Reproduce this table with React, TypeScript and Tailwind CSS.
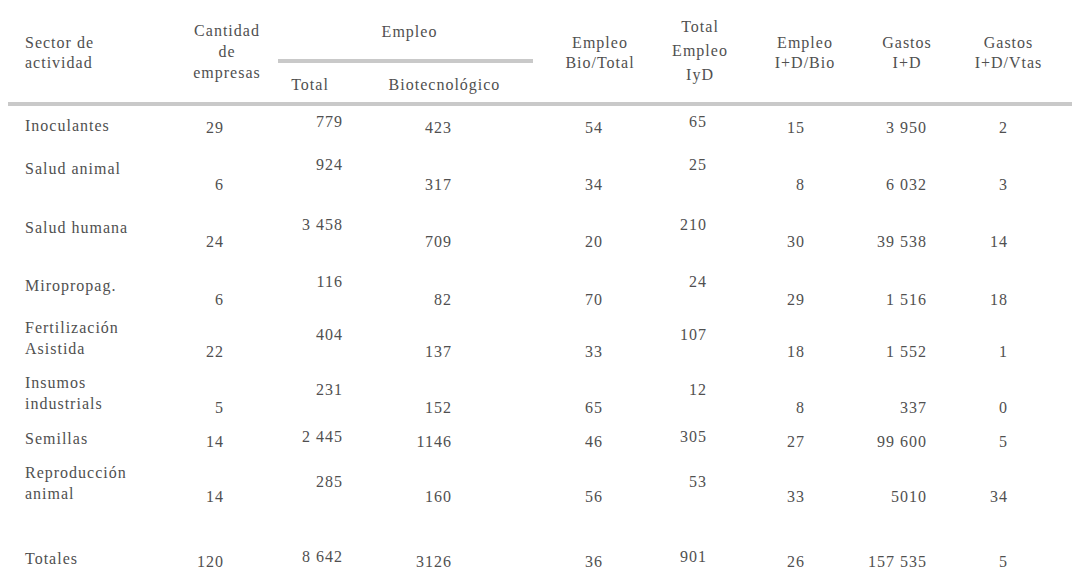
const rows = [
  { label: ["Inoculantes"], h: "h-[44px]", lp: "pt-[9px]", lo: "pt-[12px]", hi: "pt-[6px]", v: ["29", "779", "423", "54", "65", "15", "3 950", "2"] },
  { label: ["Salud animal"], h: "h-[58px]", lp: "pt-[8px]", lo: "pt-[25px]", hi: "pt-[5px]", v: ["6", "924", "317", "34", "25", "8", "6 032", "3"] },
  { label: ["Salud humana"], h: "h-[57px]", lp: "pt-[9px]", lo: "pt-[24px]", hi: "pt-[7px]", v: ["24", "3 458", "709", "20", "210", "30", "39 538", "14"] },
  { label: ["Miropropag."], h: "h-[47px]", lp: "pt-[10px]", lo: "pt-[25px]", hi: "pt-[7px]", v: ["6", "116", "82", "70", "24", "29", "1 516", "18"] },
  { label: ["Fertilización", "Asistida"], h: "h-[55px]", lp: "pt-[5px]", lo: "pt-[30px]", hi: "pt-[13px]", v: ["22", "404", "137", "33", "107", "18", "1 552", "1"] },
  { label: ["Insumos", "industrials"], h: "h-[57px]", lp: "pt-[5px]", lo: "pt-[31px]", hi: "pt-[13px]", v: ["5", "231", "152", "65", "12", "8", "337", "0"] },
  { label: ["Semillas"], h: "h-[34px]", lp: "pt-[4px]", lo: "pt-[8px]", hi: "pt-[3px]", v: ["14", "2 445", "1146", "46", "305", "27", "99 600", "5"] },
  { label: ["Reproducción", "animal"], h: "h-[82px]", lp: "pt-[4px]", lo: "pt-[29px]", hi: "pt-[14px]", v: ["14", "285", "160", "56", "53", "33", "5010", "34"] },
  { label: ["Totales"], h: "h-[48px]", lp: "pt-[8px]", lo: "pt-[12px]", hi: "pt-[7px]", v: ["120", "8 642", "3126", "36", "901", "26", "157 535", "5"] },
];

// columns 1 and 4 of the values (Total, Total Empleo IyD) sit higher in the scan
const highCols = [1, 4];

export default function App() {
  return (
    <div className="w-[1080px] h-[588px] bg-white text-[#505050] text-[16px] tracking-[1px] leading-[20px] overflow-hidden font-['Liberation_Serif','DejaVu_Serif',serif]">
      {/* header */}
      <div className="grid grid-cols-[176px_102px_255px_134px_66px_144px_60px_143px] h-[102px]">
        <div className="pl-[25px] pt-[33px]">
          <div>Sector de</div>
          <div>actividad</div>
        </div>
        <div className="pt-[20px] text-center leading-[21px]">
          <div>Cantidad</div>
          <div>de</div>
          <div>empresas</div>
        </div>
        <div className="pt-[22px] flex flex-col">
          <div className="text-center pl-[8px]">Empleo</div>
          <div className="mt-[17px] h-[4px] bg-[#c9c9c9]" />
          <div className="mt-[12px] grid grid-cols-[64px_191px]">
            <div className="text-center">Total</div>
            <div className="text-center pl-[14px]">Biotecnológico</div>
          </div>
        </div>
        <div className="pt-[33px] text-center">
          <div>Empleo</div>
          <div>Bio/Total</div>
        </div>
        <div className="pt-[15px] text-center leading-[24px]">
          <div>Total</div>
          <div>Empleo</div>
          <div>IyD</div>
        </div>
        <div className="pt-[33px] text-center">
          <div>Empleo</div>
          <div>I+D/Bio</div>
        </div>
        <div className="pt-[33px] text-center">
          <div>Gastos</div>
          <div>I+D</div>
        </div>
        <div className="pt-[33px] text-center">
          <div>Gastos</div>
          <div>I+D/Vtas</div>
        </div>
      </div>

      <div className="mx-[8px] h-[4px] bg-[#c9c9c9]" />

      {/* body */}
      {rows.map((r) => (
        <div key={r.label.join(" ")} className={`grid grid-cols-[180px_44px_119px_109px_151px_104px_98px_122px_81px_72px] ${r.h}`}>
          <div className={`pl-[25px] leading-[21px] ${r.lp}`}>
            {r.label.map((l) => (
              <div key={l}>{l}</div>
            ))}
          </div>
          {r.v.map((val, i) => (
            <div key={i} className={`text-right whitespace-nowrap ${highCols.includes(i) ? r.hi : r.lo}`}>
              {val}
            </div>
          ))}
          <div />
        </div>
      ))}
    </div>
  );
}
